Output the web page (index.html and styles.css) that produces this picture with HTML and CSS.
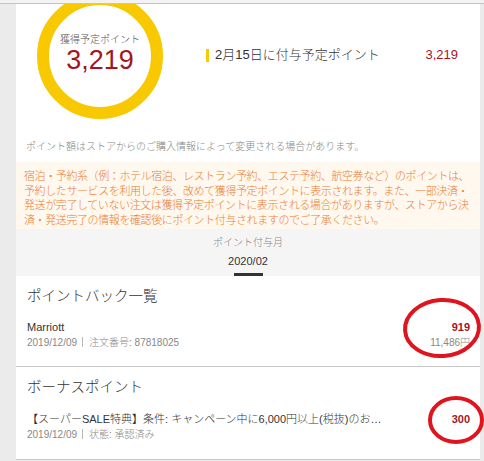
FILE: index.html
```html
<!DOCTYPE html>
<html lang="ja">
<head>
<meta charset="utf-8">
<link rel="stylesheet" href="styles.css">
</head>
<body>
<div class="topbar"></div>
<main class="page">
  <section class="summary">
    <div class="ring">
      <div class="ring-label">獲得予定ポイント</div>
      <div class="ring-num">3,219</div>
    </div>
    <div class="sched">
      <span class="sched-bar"></span>
      <span class="sched-text">2月15日に付与予定ポイント</span>
      <span class="sched-num">3,219</span>
    </div>
  </section>
  <p class="note">ポイント額はストアからのご購入情報によって変更される場合があります。</p>
  <div class="caution">宿泊・予約系（例：ホテル宿泊、レストラン予約、エステ予約、航空券など）のポイントは、<br>予約したサービスを利用した後、改めて獲得予定ポイントに表示されます。また、一部決済・<br>発送が完了していない注文は獲得予定ポイントに表示される場合がありますが、ストアから決<br>済・発送完了の情報を確認後にポイント付与されますのでご了承ください。</div>
  <div class="month">
    <div class="month-label">ポイント付与月</div>
    <div class="month-value">2020/02</div>
    <div class="month-bar"></div>
  </div>
  <section class="list">
    <h2 class="list-title">ポイントバック一覧</h2>
    <div class="item">
      <div class="item-main">
        <div class="item-name">Marriott</div>
        <div class="item-meta">2019/12/09<span class="sep"></span>注文番号: 87818025</div>
      </div>
      <div class="item-side">
        <div class="item-pt">919</div>
        <div class="item-yen">11,486円</div>
      </div>
    </div>
  </section>
  <section class="list list-second">
    <h2 class="list-title">ボーナスポイント</h2>
    <div class="item">
      <div class="item-main">
        <div class="item-name">【スーパーSALE特典】条件: キャンペーン中に6,000円以上(税抜)のお…</div>
        <div class="item-meta">2019/12/09<span class="sep"></span>状態: 承認済み</div>
      </div>
      <div class="item-side">
        <div class="item-pt">300</div>
      </div>
    </div>
  </section>
</main>
<svg class="annot" width="484" height="461" viewBox="0 0 484 461">
  <ellipse cx="442" cy="328" rx="37" ry="28" transform="rotate(-4 442 328)"></ellipse>
  <ellipse cx="456" cy="420" rx="26" ry="22"></ellipse>
</svg>
</body>
</html>
```
FILE: styles.css
```css
html, body {
  margin: 0;
  padding: 0;
}
body {
  background: #ebebeb;
  font-family: "Liberation Sans", "Noto Sans CJK JP", sans-serif;
  font-weight: 300;
  color: #333;
  width: 484px;
  height: 461px;
  overflow: hidden;
}
.topbar {
  height: 3px;
  background: #f3f3f3;
  border-bottom: 1px solid #c4c4c4;
  position: relative;
  z-index: 1;
}
.page {
  margin: 0 4px 0 16px;
  background: #fff;
}
.summary {
  display: flex;
  align-items: flex-start;
  height: 115px;
  overflow: hidden;
  padding: 0 22px 0 21px;
}
.ring {
  flex: none;
  box-sizing: border-box;
  width: 126px;
  height: 126px;
  margin-top: -11px;
  border: 12px solid #f8c800;
  border-radius: 50%;
  display: flex;
  flex-direction: column;
  align-items: center;
  justify-content: center;
  padding-bottom: 3px;
}
.ring-label {
  font-size: 10px;
  line-height: 12px;
  color: #555;
}
.ring-num {
  font-size: 27px;
  line-height: 29px;
  color: #a3161f;
}
.sched {
  flex: 1;
  display: flex;
  align-items: center;
  margin: 43px 0 0 43px;
  line-height: 16px;
}
.sched-bar {
  width: 3px;
  height: 13px;
  background: #f8c800;
  margin-right: 6px;
}
.sched-text {
  flex: 1;
  font-size: 13px;
  color: #333;
}
.sched-num {
  font-size: 13px;
  color: #a3161f;
}
.note {
  margin: 0;
  padding: 21px 10px 8px;
  font-size: 10px;
  line-height: 14px;
  color: #888;
}
.caution {
  background: #fff8ef;
  color: #ea7d33;
  font-size: 11px;
  line-height: 14.5px;
  letter-spacing: -0.4px;
  padding: 7px 8px 2px;
  white-space: nowrap;
}
.month {
  background: #f5f5f5;
  text-align: center;
  padding-top: 7px;
}
.month-label {
  font-size: 10px;
  line-height: 14px;
  color: #888;
}
.month-value {
  margin-top: 3px;
  font-size: 11px;
  line-height: 16px;
  color: #333;
}
.month-bar {
  width: 29px;
  height: 3px;
  margin: 4px auto 0;
  background: #333;
}
.list {
  padding: 11px 10px 16px 11px;
  border-bottom: 1px solid #c8c8c8;
}
.list-second {
  padding-bottom: 17px;
}
.list-title {
  margin: 0;
  font-size: 14.5px;
  line-height: 18px;
  font-weight: 300;
  color: #333;
}
.item {
  display: flex;
  justify-content: space-between;
  margin-top: 15px;
}
.list-second .item {
  margin-top: 16px;
}
.item-name {
  font-size: 11px;
  line-height: 15px;
  color: #333;
}
.item-meta {
  font-size: 10px;
  line-height: 15px;
  color: #888;
}
.sep {
  display: inline-block;
  width: 0;
  height: 10px;
  border-left: 1px solid #bbb;
  margin: 0 6px 0 5px;
  vertical-align: -1px;
}
.item-side {
  text-align: right;
}
.item-pt {
  font-size: 11px;
  line-height: 15px;
  font-weight: bold;
  color: #a3161f;
}
.item-yen {
  font-size: 10px;
  line-height: 15px;
  color: #888;
}
.annot {
  position: absolute;
  left: 0;
  top: 0;
  pointer-events: none;
}
.annot ellipse {
  fill: none;
  stroke: #e0141e;
  stroke-width: 4;
}
```
